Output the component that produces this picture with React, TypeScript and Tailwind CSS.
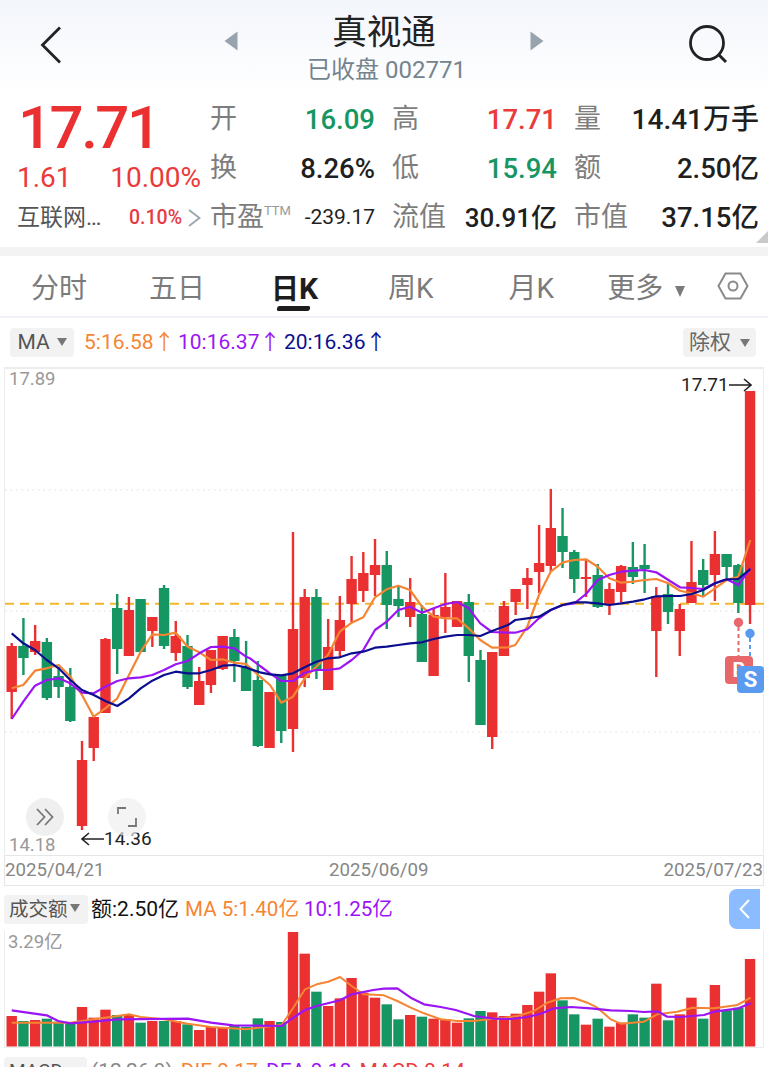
const FONT = "font-['Roboto','Noto_Sans_CJK_SC',sans-serif]";
const RED = '#ea3030';
const GREEN = '#159663';
const ORANGE = '#f58533';
const PURPLE = '#9b14f5';
const NAVY = '#0b0f8f';

// [bodyTop, bodyBottom, wickTop, wickBottom, isRed]
const candles: [number, number, number, number, number][] = [
  [646, 692, 643, 719, 1], [646, 658, 618, 675, 0], [641, 652, 625, 655, 1], [642, 698, 638, 700, 0],
  [676, 687, 667, 698, 0], [687, 721, 668, 722, 0], [760, 826, 741, 830, 1], [717, 748, 717, 761, 1],
  [639, 713, 638, 713, 1], [608, 649, 594, 674, 0], [610, 656, 597, 656, 1], [599, 652, 599, 652, 0],
  [617, 631, 617, 647, 1], [588, 646, 585, 649, 0], [636, 653, 621, 661, 1], [646, 687, 635, 689, 0],
  [681, 705, 667, 705, 1], [650, 685, 650, 693, 1], [636, 669, 636, 670, 1], [637, 661, 629, 682, 0],
  [667, 691, 641, 691, 0], [680, 746, 661, 747, 0], [692, 748, 692, 748, 1], [675, 731, 675, 743, 0],
  [629, 729, 532, 752, 1], [597, 678, 589, 687, 1], [597, 670, 589, 679, 0], [647, 690, 619, 690, 1],
  [620, 651, 596, 657, 1], [579, 604, 556, 622, 1], [573, 591, 552, 602, 1], [565, 575, 539, 596, 1],
  [565, 605, 551, 629, 0], [599, 606, 586, 617, 0], [602, 617, 578, 627, 1], [614, 662, 605, 662, 0],
  [615, 676, 608, 676, 1], [607, 617, 573, 633, 1], [601, 627, 601, 627, 1], [602, 656, 594, 682, 0],
  [660, 725, 650, 725, 0], [652, 737, 652, 749, 1], [606, 656, 601, 656, 1], [589, 602, 589, 615, 1],
  [578, 585, 568, 609, 1], [563, 572, 525, 593, 1], [528, 566, 489, 572, 1], [536, 552, 508, 568, 0],
  [552, 579, 550, 593, 0], [577, 579, 560, 597, 1], [575, 607, 564, 608, 0], [589, 605, 583, 615, 1],
  [566, 592, 565, 602, 1], [567, 577, 542, 584, 0], [565, 569, 544, 593, 0], [596, 631, 587, 677, 1],
  [594, 612, 583, 624, 0], [609, 631, 604, 656, 1], [582, 603, 541, 603, 1], [570, 585, 559, 597, 0],
  [554, 575, 531, 601, 1], [554, 567, 554, 578, 0], [565, 603, 564, 613, 0], [391, 605, 391, 624, 1],
];

const volTops = [
  495, 510, 507, 503, 512, 518, 468, 500, 476, 492, 492, 515, 510, 510, 510, 520, 537, 528, 530, 525, 528, 502, 510, 513,
  243, 308, 422, 465, 442, 381, 425, 440, 460, 505, 492, 497, 503, 505, 515, 502, 480, 484, 495, 488, 462, 422, 367, 448,
  490, 521, 503, 527, 515, 490, 500, 398, 508, 490, 440, 503, 402, 478, 470, 324,
];

const map = (ox: number, oy: number, arr: number[][]) => arr.map(([x, y]) => [ox + x / 3, oy + y / 3]);
const toPts = (arr: number[][]) => arr.map(([x, y]) => `${x.toFixed(1)},${y.toFixed(1)}`).join(' ');

const ma5 = [
  ...map(0, 520, [[35,505],[70,495],[105,452],[140,445],[176,435],[211,470],[246,525],[281,590],[316,565],[352,535],[387,465],[422,395],[457,343],[492,345],[527,338],[563,380],[598,397],[633,420],[668,418],[703,428],[738,432]]),
  ...map(250, 480, [[30,590],[60,615],[94,668],[129,650],[164,595],[199,560],[234,525],[269,455],[305,428],[340,412],[375,352],[410,328],[445,317],[480,330],[516,380],[551,410],[586,415],[621,415],[656,445],[691,480],[726,503]]),
  ...map(508, 370, [[0,832],[22,825],[58,770],[93,675],[128,605],[164,577],[199,570],[234,568],[269,590],[304,625],[340,638],[375,635],[410,630],[445,627],[481,640],[516,662],[551,670],[586,680],[621,655],[656,630],[691,620],[727,510]]),
];
const ma10 = [
  ...map(0, 520, [[35,597],[70,545],[105,497],[140,480],[176,475],[211,490],[246,518],[281,520],[316,500],[352,483],[387,475],[422,472],[457,465],[492,450],[527,433],[563,423],[598,400],[633,381],[668,380],[703,385],[738,410]]),
  ...map(250, 480, [[0,535],[30,558],[60,580],[94,603],[129,603],[164,578],[199,570],[234,570],[269,565],[305,540],[340,510],[375,450],[410,425],[445,390],[480,380],[516,398],[551,385],[586,372],[621,366],[656,385],[691,430],[726,456]]),
  ...map(508, 370, [[0,788],[22,788],[58,778],[93,745],[128,720],[164,705],[199,700],[234,672],[269,630],[304,615],[340,605],[375,602],[410,600],[445,607],[481,630],[516,652],[551,654],[586,657],[621,640],[656,628],[691,645],[727,595]]),
];
const ma20 = [
  ...map(0, 520, [[35,340],[70,370],[105,390],[140,420],[176,445],[211,480],[246,510],[281,525],[316,543],[352,558],[387,535],[422,505],[457,482],[492,465],[527,455],[563,460],[598,460],[633,450],[668,437],[703,435],[738,442]]),
  ...map(250, 480, [[0,567],[30,577],[60,583],[94,586],[129,580],[164,562],[199,545],[234,535],[269,532],[305,520],[340,515],[375,503],[410,500],[445,495],[480,490],[516,487],[551,477],[586,470],[621,465],[656,465],[691,468],[726,453]]),
  ...map(508, 370, [[0,765],[22,750],[58,745],[93,740],[128,720],[164,705],[199,697],[234,697],[269,700],[304,705],[340,700],[375,695],[410,688],[445,679],[481,678],[516,678],[551,672],[586,660],[621,640],[656,628],[691,627],[727,597]]),
];
const volMa5 = [
  ...map(0, 850, [[35,515],[140,515],[211,515],[281,505],[352,495],[387,490],[422,498],[492,505],[563,518],[633,528],[738,535],[773,530],[845,522],[880,470],[915,415],[950,400],[985,392],[1020,378],[1055,405],[1090,430]]),
  ...map(384, 850, [[0,433],[40,450],[80,470],[120,487],[170,505],[220,510],[270,510],[320,504],[360,500],[400,495],[450,480],[490,455],[530,442],[570,441],[610,455],[640,470],[680,505],[710,518],[780,512],[820,490],[880,482],[925,470],[990,472],[1060,462],[1100,440]]),
];
const volMa10 = [
  ...map(0, 850, [[35,478],[140,493],[175,510],[211,517],[281,512],[352,505],[563,503],[633,515],[700,523],[845,525],[880,500],[915,477],[950,465],[1020,448],[1055,430],[1120,417]]),
  ...map(384, 850, [[0,413],[40,412],[80,440],[120,460],[170,468],[215,477],[270,495],[330,503],[380,504],[430,498],[470,488],[510,472],[560,468],[620,472],[680,478],[740,480],[780,483],[820,481],[850,497],[890,498],[960,492],[990,482],[1060,473],[1100,457]]),
];

const cx = (i: number) => 11.7 + i * 11.72;

function Tri({ className }: { className: string }) {
  return <span className={`inline-block border-x-[5.5px] border-t-[9px] border-x-transparent ${className}`} />;
}

function Label({ children, className = '' }: { children: React.ReactNode; className?: string }) {
  return <span className={`text-[27px] leading-none text-[#7d7d7d] ${className}`}>{children}</span>;
}

function Val({ children, color = 'text-[#1f1f1f]', size = 'text-[27.5px]' }: { children: React.ReactNode; color?: string; size?: string }) {
  return <span className={`${size} leading-none ${color} font-medium`}>{children}</span>;
}

function Stat({ label, value, color, size, width }: { label: React.ReactNode; value: string; color?: string; size?: string; width: string }) {
  return (
    <div className={`flex items-center justify-between h-[49px] ${width}`}>
      <Label>{label}</Label>
      <Val color={color} size={size}>{value}</Val>
    </div>
  );
}

function ArrowRight() {
  return (
    <svg width="23" height="14" viewBox="0 0 23 14" className="inline-block shrink-0">
      <path d="M0 7 H22 M15 1 L22 7 L15 13" fill="none" stroke="#222" strokeWidth="1.6" />
    </svg>
  );
}

function ArrowLeft() {
  return (
    <svg width="23" height="14" viewBox="0 0 23 14" className="inline-block shrink-0">
      <path d="M23 7 H1 M8 1 L1 7 L8 13" fill="none" stroke="#222" strokeWidth="1.6" />
    </svg>
  );
}

export default function App() {
  return (
    <div className={`w-[768px] h-[1067px] overflow-hidden bg-white relative ${FONT}`}>
      {/* header */}
      <div className="h-[94px] flex items-start bg-gradient-to-b from-[#f3f6fb] to-white relative">
        <svg width="22" height="38" viewBox="0 0 22 38" className="ml-[40px] mt-[26px] shrink-0">
          <path d="M20 1.5 L2.5 19 L20 36.5" fill="none" stroke="#222" strokeWidth="2.8" />
        </svg>
        <svg width="14" height="20" viewBox="0 0 14 20" className="ml-[162px] mt-[31px] shrink-0">
          <path d="M13.5 0.5 V19.5 L0.5 10 Z" fill="#99a3ae" />
        </svg>
        <div className="w-[292px] flex flex-col items-center shrink-0">
          <div className="text-[34.5px] leading-none mt-[15px] text-[#222]">真视通</div>
          <div className="text-[24px] leading-none mt-[8px] ml-[5px] text-[#74848f]">已收盘 002771</div>
        </div>
        <svg width="14" height="20" viewBox="0 0 14 20" className="mt-[31px] shrink-0">
          <path d="M0.5 0.5 V19.5 L13.5 10 Z" fill="#99a3ae" />
        </svg>
        <svg width="42" height="42" viewBox="0 0 42 42" className="ml-[143px] mt-[24px] shrink-0">
          <circle cx="20" cy="19" r="16.5" fill="none" stroke="#222" strokeWidth="2.8" />
          <path d="M31 30 L39 38" stroke="#222" strokeWidth="3" />
        </svg>
      </div>

      {/* quote */}
      <div className="h-[153px] flex relative">
        <div className="w-[210px] shrink-0 flex flex-col pl-[17px]">
          <div className="text-[60px] leading-none font-medium text-[#ea3030] mt-[4px] ml-[1px] tracking-[-2.5px]">17.71</div>
          <div className="flex justify-between pr-[9px] mt-[2px] text-[#ea3a3a]">
            <span className="text-[28px] leading-[36px]">1.61</span>
            <span className="text-[28px] leading-[36px]">10.00%</span>
          </div>
          <div className="flex items-center mt-[6px]">
            <span className="text-[23px] leading-[32px] text-[#555] w-[112px]">互联网…</span>
            <span className="text-[19.5px] leading-[32px] text-[#e53b44] font-medium">0.10%</span>
            <svg width="13" height="18" viewBox="0 0 13 18" className="ml-[6px]">
              <path d="M1 1 L11.5 9 L1 17" fill="none" stroke="#9aa5ae" strokeWidth="1.8" />
            </svg>
          </div>
        </div>
        <div className="grid grid-cols-[165px_165px_185px] gap-x-[17px] content-start mt-[1px] shrink-0">
          <Stat width="w-[165px]" label="开" value="16.09" color="text-[#159663]" />
          <Stat width="w-[165px]" label="高" value="17.71" color="text-[#ea3a3a]" />
          <Stat width="w-[185px]" label="量" value="14.41万手" size="text-[28px]" />
          <Stat width="w-[165px]" label="换" value="8.26%" />
          <Stat width="w-[165px]" label="低" value="15.94" color="text-[#159663]" />
          <Stat width="w-[185px]" label="额" value="2.50亿" />
          <div className="flex items-center justify-between h-[49px] w-[165px]">
            <span className="text-[27px] leading-none text-[#7d7d7d]">
              市盈<sup className="text-[13px] relative -top-[1px] align-super text-[#999]">TTM</sup>
            </span>
            <span className="text-[21px] leading-none text-[#1f1f1f]">-239.17</span>
          </div>
          <Stat width="w-[165px]" label="流值" value="30.91亿" size="text-[26px]" />
          <Stat width="w-[185px]" label="市值" value="37.15亿" />
        </div>
        <div className="absolute right-0 bottom-[4px] w-0 h-0 border-l-[12px] border-b-[12px] border-l-transparent border-b-[#c9c9c9]" />
      </div>

      {/* grey separator */}
      <div className="h-[9px] bg-[#f3f3f3]" />

      {/* tabs */}
      <div className="h-[62px] flex items-center text-[28px] text-[#7b7b7b] border-b-2 border-[#f0f0f8] relative pt-[5px]">
        <span className="ml-[31px]">分时</span>
        <span className="ml-[62px]">五日</span>
        <span className="ml-[66px] w-[45px] text-[#1d1d1d] font-bold relative whitespace-nowrap">
          日<span className="text-[30px]">K</span>
          <span className="absolute left-[6px] top-[40px] w-[33px] h-[5px] bg-[#1d1d1d] rounded-[2px] -skew-x-12" />
        </span>
        <span className="ml-[72px]">周K</span>
        <span className="ml-[75px]">月K</span>
        <span className="ml-[53px]">更多</span>
        <Tri className="ml-[12px] mt-[5px] border-t-[#7b7b7b] !border-t-[11px]" />
        <svg width="32" height="28" viewBox="0 0 32 28" className="ml-[32px] mb-[5px]">
          <path d="M8.5 1.5 H23.5 L30.5 14 L23.5 26.5 H8.5 L1.5 14 Z" fill="none" stroke="#8a8a8a" strokeWidth="2" />
          <circle cx="16" cy="14" r="4.5" fill="none" stroke="#8a8a8a" strokeWidth="2" />
        </svg>
      </div>

      {/* indicator row */}
      <div className="h-[49px] flex items-center pl-[10px] pr-[12px]">
        <div className="w-[64px] h-[29px] bg-[#f2f2f2] rounded-[4px] flex items-center justify-center gap-[7px] text-[21px] text-[#555]">
          MA <Tri className="border-t-[#777] !border-t-[8px] mb-[2px]" />
        </div>
        <span className="ml-[10px] text-[21px] leading-none text-[#f58533] w-[94px] whitespace-nowrap">5:16.58↑</span>
        <span className="text-[21px] leading-none text-[#9b14f5] w-[106px] whitespace-nowrap">10:16.37↑</span>
        <span className="text-[21px] leading-none text-[#0b0f8f] whitespace-nowrap">20:16.36↑</span>
        <div className="ml-auto w-[73px] h-[29px] bg-[#f2f2f2] rounded-[4px] flex items-center justify-center gap-[9px] text-[21px] text-[#666]">
          除权 <Tri className="border-t-[#777] !border-t-[8px] !border-x-[5px]" />
        </div>
      </div>

      {/* main chart */}
      <div className="relative h-[488px] ml-[4px] mr-[4px] border-x border-t-2 border-[#ececec]">
        <svg width="768" height="488" viewBox="0 367 768 488" className="absolute left-[-5px] top-[-2px] max-w-none">
          {[490, 611, 732].map((y) => (
            <line key={y} x1="5" x2="763" y1={y} y2={y} stroke="#dedede" strokeWidth="1" strokeDasharray="1.5 4" />
          ))}
          <line x1="5" x2="768" y1="603.7" y2="603.7" stroke="#f3b62b" strokeWidth="2" strokeDasharray="9 6" />
          {candles.map(([t, b, wt, wb, r], i) => {
            const c = r ? RED : GREEN;
            return (
              <g key={i}>
                <rect x={cx(i) - 1.2} y={wt} width="2.4" height={wb - wt} fill={c} />
                <rect x={cx(i) - 5.2} y={t} width="10.4" height={b - t} fill={c} />
              </g>
            );
          })}
          <polyline points={toPts(ma5)} fill="none" stroke={ORANGE} strokeWidth="2.2" strokeLinejoin="round" />
          <polyline points={toPts(ma10)} fill="none" stroke={PURPLE} strokeWidth="2.2" strokeLinejoin="round" />
          <polyline points={toPts(ma20)} fill="none" stroke={NAVY} strokeWidth="2.2" strokeLinejoin="round" />
          <line x1="738.5" x2="738.5" y1="627" y2="656" stroke="#e8676a" strokeWidth="2" strokeDasharray="4 3" />
          <circle cx="738.5" cy="622.5" r="4.7" fill="#e8676a" />
          <line x1="750" x2="750" y1="638" y2="667" stroke="#5a9bf0" strokeWidth="2" strokeDasharray="4 3" />
          <circle cx="750" cy="633.5" r="4.7" fill="#5a9bf0" />
        </svg>
        <span className="absolute left-[4px] top-[-1px] text-[18.5px] leading-[22px] text-[#999]">17.89</span>
        <span className="absolute left-[676px] top-[5px] text-[19px] leading-[22px] text-[#222] whitespace-nowrap flex items-center">17.71<ArrowRight /></span>
        <span className="absolute left-[4px] top-[465px] text-[18.5px] leading-[22px] text-[#999]">14.18</span>
        <span className="absolute left-[76px] top-[459px] text-[19px] leading-[22px] text-[#222] whitespace-nowrap flex items-center"><ArrowLeft />14.36</span>
        <div className="absolute left-[21px] top-[429px] w-[38px] h-[38px] rounded-full bg-[#efefef] flex items-center justify-center">
          <svg width="20" height="18" viewBox="0 0 20 18">
            <path d="M2 1 L9.5 9 L2 17 M10 1 L17.5 9 L10 17" fill="none" stroke="#777" strokeWidth="1.8" />
          </svg>
        </div>
        <div className="absolute left-[103px] top-[429px] w-[38px] h-[38px] rounded-full bg-[#efefef]/70 flex items-center justify-center">
          <svg width="20" height="20" viewBox="0 0 20 20">
            <path d="M1 7 V1 H9 M19 11 V19 H11" fill="none" stroke="#777" strokeWidth="1.8" />
          </svg>
        </div>
        <div className="absolute left-[720px] top-[287px] w-[28px] h-[28px] rounded-[4px] bg-[#e8676a] flex items-center justify-center text-white font-bold text-[20px]">B</div>
        <div className="absolute left-[732px] top-[297px] w-[27px] h-[27px] rounded-[4px] bg-[#5a9bf0] flex items-center justify-center text-white font-bold text-[22px]">S</div>
      </div>

      {/* dates */}
      <div className="ml-[4px] mr-[4px] h-[31px] border-x border-y border-[#e6e6e6] flex items-center justify-between text-[18.7px] leading-none text-[#868686] whitespace-nowrap relative">
        <span>2025/04/21</span>
        <span className="absolute left-[324px]">2025/06/09</span>
        <span>2025/07/23</span>
      </div>

      {/* volume header */}
      <div className="h-[45px] flex items-center pl-[4px] pt-[2px] relative">
        <div className="w-[84px] h-[29px] bg-[#f2f2f2] rounded-[4px] flex items-center pl-[5px] gap-[2px] text-[19.5px] text-[#555] whitespace-nowrap">
          成交额<Tri className="border-t-[#777] !border-t-[8px] mb-[3px]" />
        </div>
        <span className="ml-[3px] text-[21px] text-[#111] whitespace-nowrap">额:2.50亿</span>
        <span className="ml-[6px] text-[20.6px] text-[#f58533] whitespace-nowrap">MA 5:1.40亿</span>
        <span className="ml-[5px] text-[20.6px] text-[#9b14f5] whitespace-nowrap">10:1.25亿</span>
        <div className="absolute left-[729px] top-[3px] w-[31px] h-[40px] bg-[#8bbcff] rounded-l-[8px] flex items-center justify-center">
          <svg width="13" height="22" viewBox="0 0 13 22">
            <path d="M11 2 L2.5 11 L11 20" fill="none" stroke="#fff" strokeWidth="2" />
          </svg>
        </div>
      </div>

      {/* volume chart */}
      <div className="relative h-[117px] ml-[4px] mr-[4px] border-x border-b border-[#ececec]">
        <svg width="768" height="116" viewBox="0 930 768 116" className="absolute left-[-5px] top-0 max-w-none">
          {volTops.map((t, i) => {
            const top = 850 + t / 3;
            return <rect key={i} x={cx(i) - 5.2} y={top} width="10.4" height={1045.5 - top} fill={candles[i][4] ? RED : GREEN} />;
          })}
          <polyline points={toPts(volMa5)} fill="none" stroke={ORANGE} strokeWidth="2" strokeLinejoin="round" />
          <polyline points={toPts(volMa10)} fill="none" stroke={PURPLE} strokeWidth="2.2" strokeLinejoin="round" />
        </svg>
        <span className="absolute left-[3px] top-0 text-[18.5px] leading-[22px] text-[#999]">3.29亿</span>
      </div>

      {/* MACD, cut off by the window */}
      <div className="h-[40px] flex items-start pl-[4px] mt-[9px]">
        <div className="w-[83px] h-[29px] bg-[#f2f2f2] rounded-[4px] flex items-center pl-[5px] gap-[4px] text-[19px] text-[#555]">
          MACD<Tri className="border-t-[#777] !border-t-[8px]" />
        </div>
        <span className="ml-[4px] text-[21px] leading-[29px] text-[#888] whitespace-nowrap">(12,26,9)</span>
        <span className="ml-[8px] text-[21px] leading-[29px] text-[#f58533] whitespace-nowrap">DIF:0.17</span>
        <span className="ml-[8px] text-[21px] leading-[29px] text-[#9b14f5] whitespace-nowrap">DEA:0.10</span>
        <span className="ml-[8px] text-[21px] leading-[29px] text-[#ea3a3a] whitespace-nowrap">MACD:0.14</span>
      </div>
    </div>
  );
}
